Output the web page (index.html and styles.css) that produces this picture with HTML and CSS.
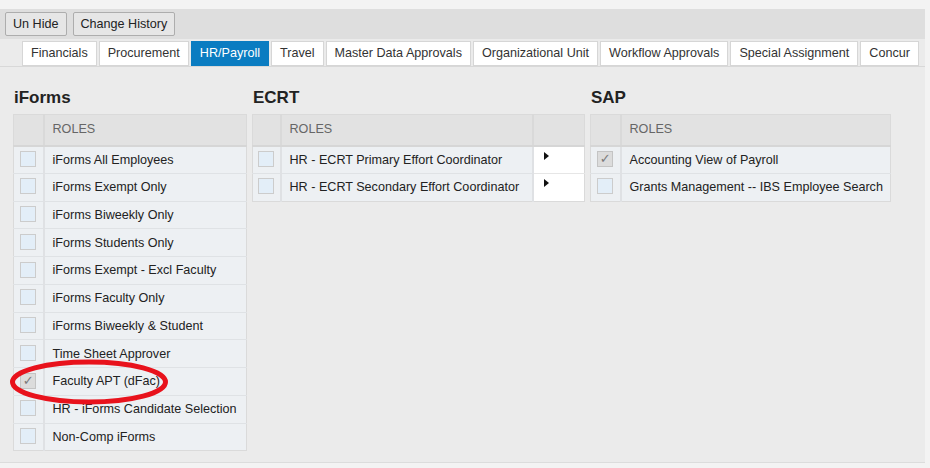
FILE: index.html
```html
<!DOCTYPE html>
<html>
<head>
<meta charset="utf-8">
<link rel="stylesheet" href="styles.css">
</head>
<body>
<div class="page">
  <div class="toolbar">
    <button class="btn">Un Hide</button>
    <button class="btn">Change History</button>
  </div>
  <div class="tabs">
    <div class="tab">Financials</div>
    <div class="tab">Procurement</div>
    <div class="tab active">HR/Payroll</div>
    <div class="tab">Travel</div>
    <div class="tab">Master Data Approvals</div>
    <div class="tab">Organizational Unit</div>
    <div class="tab">Workflow Approvals</div>
    <div class="tab">Special Assignment</div>
    <div class="tab">Concur</div>
  </div>
  <div class="content">
    <section class="group g-iforms">
      <h2 class="title">iForms</h2>
      <table class="grid">
        <tr class="head"><th class="cb"></th><th>ROLES</th></tr>
        <tr><td class="cb"><span class="box"></span></td><td>iForms All Employees</td></tr>
        <tr><td class="cb"><span class="box"></span></td><td>iForms Exempt Only</td></tr>
        <tr><td class="cb"><span class="box"></span></td><td>iForms Biweekly Only</td></tr>
        <tr><td class="cb"><span class="box"></span></td><td>iForms Students Only</td></tr>
        <tr><td class="cb"><span class="box"></span></td><td>iForms Exempt - Excl Faculty</td></tr>
        <tr><td class="cb"><span class="box"></span></td><td>iForms Faculty Only</td></tr>
        <tr><td class="cb"><span class="box"></span></td><td>iForms Biweekly &amp; Student</td></tr>
        <tr><td class="cb"><span class="box"></span></td><td>Time Sheet Approver</td></tr>
        <tr><td class="cb"><span class="box checked">&#10003;</span></td><td>Faculty APT (dFac)</td></tr>
        <tr><td class="cb"><span class="box"></span></td><td>HR - iForms Candidate Selection</td></tr>
        <tr><td class="cb"><span class="box"></span></td><td>Non-Comp iForms</td></tr>
      </table>
      <svg class="circle" width="170" height="56" viewBox="0 0 170 56">
        <ellipse cx="84" cy="26" rx="76.5" ry="20" fill="none" stroke="#e8121c" stroke-width="5"/>
      </svg>
    </section>
    <section class="group g-ecrt">
      <h2 class="title">ECRT</h2>
      <table class="grid">
        <tr class="head"><th class="cb"></th><th>ROLES</th><th class="extra"></th></tr>
        <tr><td class="cb"><span class="box"></span></td><td>HR - ECRT Primary Effort Coordinator</td><td class="extra"><span class="tri"></span></td></tr>
        <tr><td class="cb"><span class="box"></span></td><td>HR - ECRT Secondary Effort Coordinator</td><td class="extra"><span class="tri"></span></td></tr>
      </table>
    </section>
    <section class="group g-sap">
      <h2 class="title">SAP</h2>
      <table class="grid">
        <tr class="head"><th class="cb"></th><th>ROLES</th></tr>
        <tr><td class="cb"><span class="box checked">&#10003;</span></td><td>Accounting View of Payroll</td></tr>
        <tr><td class="cb"><span class="box"></span></td><td>Grants Management -- IBS Employee Search</td></tr>
      </table>
    </section>
  </div>
</div>
</body>
</html>
```
FILE: styles.css
```css
html, body {
  margin: 0;
  padding: 0;
}
body {
  background: #f3f3f3;
  font-family: "Liberation Sans", Arial, sans-serif;
  font-size: 12.6px;
  color: #222;
  width: 930px;
  height: 468px;
  overflow: hidden;
}
.page {
  width: 925px;
  padding-top: 9px;
}
.toolbar {
  background: #dedede;
  height: 30px;
  box-sizing: border-box;
  padding: 3px 0 0 5px;
  display: flex;
  gap: 6px;
  align-items: flex-start;
}
.btn {
  font-family: "Liberation Sans", Arial, sans-serif;
  font-size: 12.6px;
  color: #222;
  background: #e6e6e6;
  border: 1px solid #adadad;
  border-radius: 2px;
  height: 24px;
  padding: 0 7px;
  margin: 0;
}
.tabs {
  background: #ebebeb;
  display: flex;
  gap: 2px;
  padding: 2px 0 0 22px;
  height: 28px;
  box-sizing: border-box;
  border-bottom: 1px solid #d8d8d8;
  align-items: flex-start;
}
.tab {
  background: #fff;
  border: 1px solid #d6d6d6;
  height: 25px;
  box-sizing: border-box;
  line-height: 23px;
  padding: 0 8px;
  color: #333;
  white-space: nowrap;
}
.tab.active {
  background: #0a7cc1;
  border-color: #0a7cc1;
  color: #fff;
}
.content {
  background: #ebebeb;
  height: 396px;
  border-bottom: 1px solid #dcdcdc;
  display: flex;
  gap: 5px;
  padding: 21px 0 0 13px;
  box-sizing: border-box;
}
.group {
  position: relative;
}
.title {
  margin: 0 0 6px 1px;
  font-size: 17px;
  font-weight: bold;
  color: #222;
  line-height: 20px;
  height: 20px;
}
.grid {
  border-collapse: collapse;
  border: 1px solid #dadada;
  background: #edf0f3;
}
.g-iforms .grid { width: 234px; }
.g-ecrt .grid { width: 333px; }
.g-sap .grid { width: 301px; }
.grid th {
  background: #e2e2e2;
  color: #666;
  font-weight: normal;
  text-align: left;
  height: 31px;
  padding: 0 0 2px 8px;
  border-left: 2px solid #d9d9d9;
  border-bottom: 2px solid #d6d6d6;
  box-sizing: border-box;
}
.grid td {
  height: 27.75px;
  padding: 0 0 0 8px;
  border-left: 2px solid #dfe1e4;
  border-top: 1px solid #dfe2e5;
  color: #222;
  white-space: nowrap;
  box-sizing: border-box;
}
.grid th.cb, .grid td.cb {
  width: 30px;
  padding: 0;
  border-left: none;
  text-align: center;
}
.g-ecrt .grid th.cb, .g-ecrt .grid td.cb { width: 28px; }
.grid td.extra {
  width: 52px;
  background: #fff;
  padding: 0 0 0 10px;
  border-top: 1px solid #e6e6e6;
}
.grid th.extra { width: 52px; }
.box {
  display: inline-block;
  width: 14px;
  height: 14px;
  border: 1px solid #cccccc;
  background: #e3eef8;
  vertical-align: middle;
  margin-top: -2px;
  line-height: 14px;
  font-size: 13px;
  color: #7a7a7a;
  text-align: center;
  font-family: "DejaVu Sans", sans-serif;
}
.box.checked {
  background: #dcdcdc;
  border-color: #c4c4c4;
}
.tri {
  display: inline-block;
  width: 0;
  height: 0;
  border-top: 4px solid transparent;
  border-bottom: 4px solid transparent;
  border-left: 5px solid #111;
  vertical-align: top;
  margin-top: -1px;
}
.circle {
  position: absolute;
  left: -8px;
  top: 268px;
}
```
